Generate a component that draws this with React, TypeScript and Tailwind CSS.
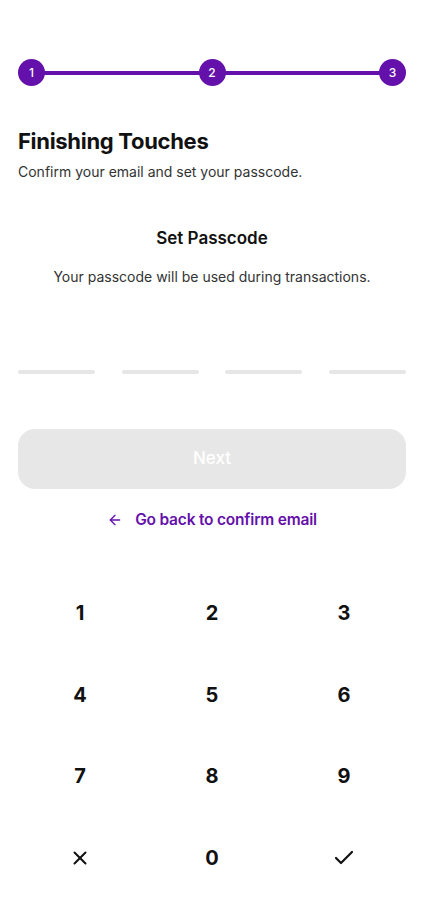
import { ArrowLeft, X, Check } from "lucide-react";

const purple = "#6410aa";

function Stepper() {
  return (
    <div className="relative flex items-center justify-between">
      <div className="absolute left-[14px] right-[14px] top-1/2 h-[4px] -translate-y-1/2 bg-[#6410aa]" />
      {[1, 2, 3].map((n) => (
        <div
          key={n}
          className="relative z-10 flex h-[27px] w-[27px] items-center justify-center rounded-full bg-[#6410aa] text-[12px] font-medium text-white"
        >
          {n}
        </div>
      ))}
    </div>
  );
}

export default function App() {
  const keys = ["1", "2", "3", "4", "5", "6", "7", "8", "9", "x", "0", "ok"];

  return (
    <div
      className="min-h-[920px] w-full bg-white px-[18px] text-[#111]"
      style={{ fontFamily: "Inter, 'Noto Sans', sans-serif" }}
    >
      <div className="pt-[59px]">
        <Stepper />
      </div>

      <h1 className="mt-[41px] text-[22px] font-bold leading-[28px] tracking-[-0.3px]">
        Finishing Touches
      </h1>
      <p className="mt-[8px] text-[14px] leading-[18px] text-[#333]">
        Confirm your email and set your passcode.
      </p>

      <h2 className="mt-[46px] text-center text-[17px] font-semibold leading-[22px]">
        Set Passcode
      </h2>
      <p className="mt-[19px] text-center text-[14px] leading-[18px] text-[#333]">
        Your passcode will be used during transactions.
      </p>

      <div className="mt-[84px] flex justify-between">
        {[0, 1, 2, 3].map((i) => (
          <div key={i} className="h-[4px] w-[77px] rounded-full bg-[#e6e6e6]" />
        ))}
      </div>

      <button className="mt-[55px] flex h-[60px] w-full items-center justify-center rounded-[17px] bg-[#e7e7e7] text-[17px] font-medium text-white">
        Next
      </button>

      <div className="mt-[19px] flex items-center justify-center gap-[12px] text-[15.5px] font-semibold text-[#6410aa]">
        <ArrowLeft size={16} strokeWidth={2} color={purple} />
        <span className="tracking-[-0.2px]">Go back to confirm email</span>
      </div>

      <div className="-mx-[4px] mt-[41px] grid grid-cols-3">
        {keys.map((k) => (
          <div key={k} className="flex h-[81.5px] items-center justify-center text-[20px] font-bold">
            {k === "x" ? (
              <X size={22} strokeWidth={2.2} />
            ) : k === "ok" ? (
              <Check size={24} strokeWidth={2.2} />
            ) : (
              k
            )}
          </div>
        ))}
      </div>
    </div>
  );
}
